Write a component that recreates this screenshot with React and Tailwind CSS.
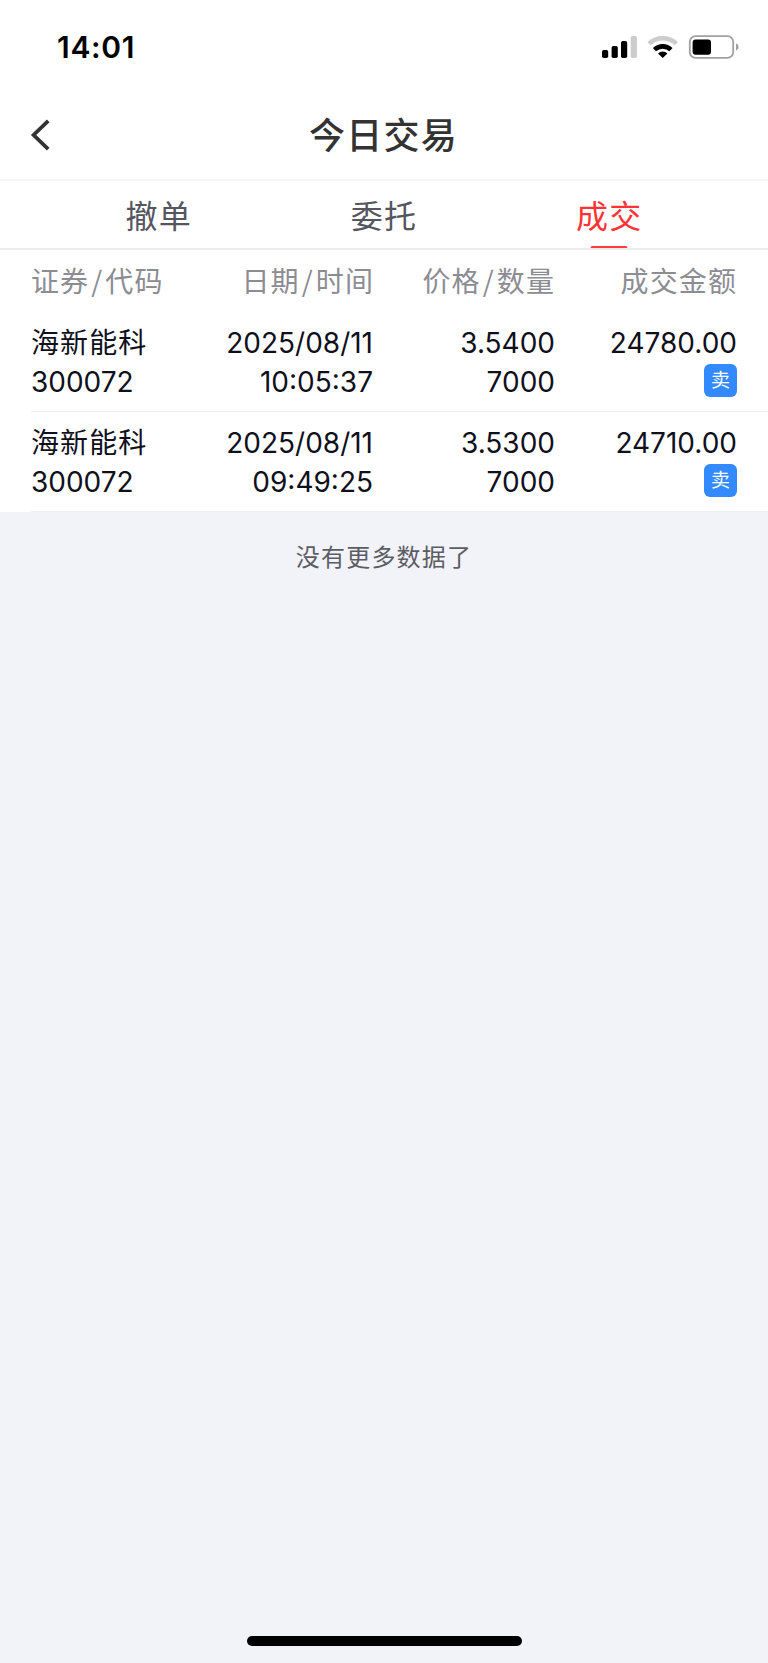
const TABS = [
  { key: 'cancel', label: '撤单' },
  { key: 'orders', label: '委托' },
  { key: 'deals', label: '成交' },
];

const DEALS = [
  { name: '海新能科', code: '300072', date: '2025/08/11', time: '10:05:37', price: '3.5400', qty: '7000', amount: '24780.00', side: '卖' },
  { name: '海新能科', code: '300072', date: '2025/08/11', time: '09:49:25', price: '3.5300', qty: '7000', amount: '24710.00', side: '卖' },
];

function StatusBar() {
  return (
    <div className="h-[90px] flex items-start justify-between pl-[57px] pr-[29px] pt-[29px] text-black">
      <span className="text-[30px] leading-[36px] font-semibold tracking-[0.7px]">14:01</span>
      <svg className="mt-[5px]" width="138" height="26" viewBox="601 34 138 26" fill="none">
        <rect x="602" y="50" width="6.2" height="8" rx="1.8" fill="#000" />
        <rect x="611.6" y="46" width="6.2" height="12" rx="1.8" fill="#000" />
        <rect x="621" y="41" width="6.2" height="17" rx="1.8" fill="#000" />
        <rect x="630.7" y="36" width="6.2" height="22" rx="1.8" fill="#ccc" />
        <path d="M649 43.6 A20.4 20.4 0 0 1 676.4 43.6" stroke="#ccc" strokeWidth="4.6" />
        <path d="M654.4 49.6 A12.4 12.4 0 0 1 671 49.6" stroke="#000" strokeWidth="4.6" />
        <path d="M662.7 58 L658 53.4 A6.8 6.8 0 0 1 667.4 53.4 Z" fill="#000" />
        <rect x="689.8" y="36.2" width="43.4" height="21.6" rx="5.6" stroke="#a0a0a0" strokeWidth="1.8" />
        <rect x="692.6" y="39.4" width="18.4" height="15.4" rx="3" fill="#000" />
        <path d="M736 43.2 Q738.6 44.4 738.6 47 T736 50.8 Z" fill="#a0a0a0" />
      </svg>
    </div>
  );
}

function Header() {
  return (
    <div className="h-[91px] flex items-center border-b-2 border-[#f8f8f8] px-[30px]">
      <svg className="mt-[1px]" width="22" height="34" viewBox="0 0 22 34" fill="none" stroke="#333" strokeWidth="3.8">
        <path d="M18.2 2.8 L3.6 17 L18.2 31.2" />
      </svg>
      <h1 className="flex-1 pt-[3px] pr-[23px] text-center text-[36px] leading-[48px] font-medium tracking-[1.3px] text-[#333]">
        今日交易
      </h1>
    </div>
  );
}

function Tabs({ active }) {
  return (
    <div className="h-[69px] flex px-[46px] border-b-2 border-[#ececec]">
      {TABS.map((t) => (
        <div
          key={t.key}
          className={`relative flex-1 text-center text-[32px] leading-[71px] tracking-[1.2px] ${
            t.key === active ? 'text-[#ff3333]' : 'text-[#555560]'
          }`}
        >
          {t.label}
          {t.key === active && (
            <span className="absolute bottom-0 left-1/2 -translate-x-1/2 w-[37px] h-[2px] rounded-t-sm bg-[#ff3b3b]" />
          )}
        </div>
      ))}
    </div>
  );
}

function HeadCell({ a, b }) {
  return (
    <div>
      {a}
      {b && <span className="mx-[2px]">/</span>}
      {b}
    </div>
  );
}

export default function App() {
  return (
    <div className="min-h-[1663px] flex flex-col bg-[#f1f3f8] font-[Inter,'Noto_Sans_CJK_SC',sans-serif]">
      <div className="bg-white">
        <StatusBar />
        <Header />
        <Tabs active="deals" />

        <div className="h-[62px] grid grid-cols-[141px_202px_181px_182px] pl-[31px] font-['Noto_Sans_CJK_SC',sans-serif] text-[28px] leading-[61px] tracking-[1.1px] text-[#8c8c93] text-right">
          <div className="text-left">
            <HeadCell a="证券" b="代码" />
          </div>
          <HeadCell a="日期" b="时间" />
          <HeadCell a="价格" b="数量" />
          <HeadCell a="成交金额" />
        </div>

        {DEALS.map((d) => (
          <div key={d.time} className="pl-[31px]">
            <div className="h-[100px] pt-[12px] grid grid-cols-[141px_201px_182px_182px] border-b border-[#eeeeef] text-[28px] leading-[39px] text-[#10101c] text-right">
              <div className="text-left">
                <div className="tracking-[1.1px]">{d.name}</div>
                <div>{d.code}</div>
              </div>
              <div>
                <div>{d.date}</div>
                <div>{d.time}</div>
              </div>
              <div>
                <div>{d.price}</div>
                <div>{d.qty}</div>
              </div>
              <div className="flex flex-col items-end">
                <div>{d.amount}</div>
                <div className="mt-[1px] w-[33px] h-[33px] rounded-[6px] bg-[#338aff] text-center text-[19px] leading-[34px] text-white">
                  {d.side}
                </div>
              </div>
            </div>
          </div>
        ))}
      </div>

      <p className="mt-[28px] text-center text-[24px] leading-[36px] tracking-[1.2px] text-[#5c5c64]">没有更多数据了</p>

      <div className="mt-auto mb-[17px] mx-auto w-[275px] h-[10px] rounded-full bg-black" />
    </div>
  );
}
